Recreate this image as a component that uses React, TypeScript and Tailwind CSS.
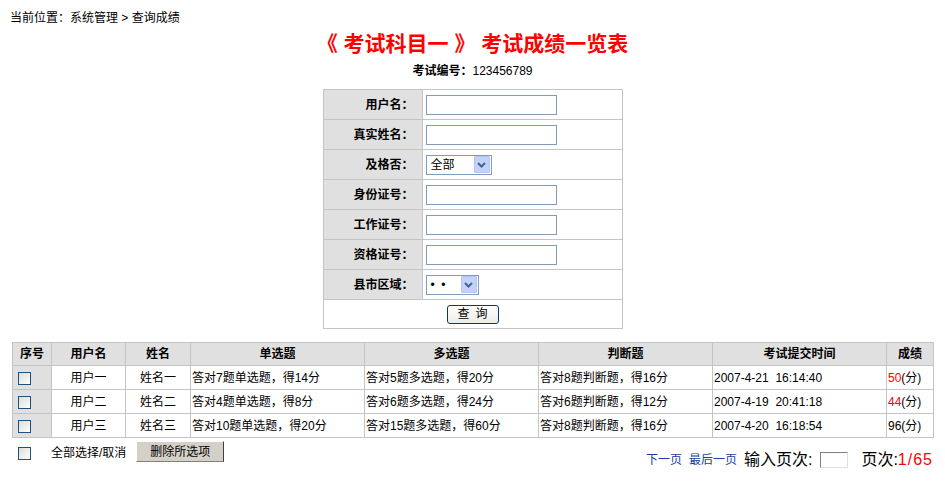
const font = { fontFamily: '"Liberation Sans", "Noto Sans CJK SC", sans-serif' }

function Chk() {
  return (
    <span className="inline-block w-[13px] h-[13px] border border-[#1c5180] bg-gradient-to-br from-[#dcdcd6] to-white align-middle" />
  )
}

function Arrow() {
  return (
    <span className="flex items-center justify-center w-[16px] h-[17px] bg-[#c1d3fb] border border-[#b4c6ef] rounded-[1px]">
      <svg width="9" height="6" viewBox="0 0 9 6">
        <path d="M1 1 L4.5 4.5 L8 1" stroke="#4d6185" strokeWidth="2" fill="none" />
      </svg>
    </span>
  )
}

function TextInput() {
  return <div className="w-[131px] h-[20px] border border-[#7f9db9] bg-white" />
}

function Select({ label, w }: { label: string; w: string }) {
  return (
    <div className={`${w} h-[20px] border border-[#7f9db9] bg-white flex items-center justify-between pl-[4px] pr-[1px]`}>
      <span className="text-[12px] text-black whitespace-pre">{label}</span>
      <Arrow />
    </div>
  )
}

const formRows: { label: string; field: React.ReactNode }[] = [
  { label: '用户名：', field: <TextInput /> },
  { label: '真实姓名：', field: <TextInput /> },
  { label: '及格否：', field: <Select label="全部" w="w-[66px]" /> },
  { label: '身份证号：', field: <TextInput /> },
  { label: '工作证号：', field: <TextInput /> },
  { label: '资格证号：', field: <TextInput /> },
  { label: '县市区域：', field: <Select label="•  •" w="w-[53px]" /> },
]

const results = [
  ['用户一', '姓名一', '答对7题单选题，得14分', '答对5题多选题，得20分', '答对8题判断题，得16分', '2007-4-21  16:14:40', '50', true],
  ['用户二', '姓名二', '答对4题单选题，得8分', '答对6题多选题，得24分', '答对6题判断题，得12分', '2007-4-19  20:41:18', '44', true],
  ['用户三', '姓名三', '答对10题单选题，得20分', '答对15题多选题，得60分', '答对8题判断题，得16分', '2007-4-20  16:18:54', '96', false],
] as const

export default function App() {
  return (
    <div className="w-[945px] h-[482px] bg-white text-black text-[12px]" style={font}>
      <div className="pl-[10px] pt-[10px] h-[26px] leading-[16px]">当前位置：系统管理 &gt; 查询成绩</div>

      <h1 className="text-center text-[21px] font-bold text-[#ff0000] leading-[28px] mt-[4px]">
        《 考试科目一 》 考试成绩一览表
      </h1>
      <div className="text-center mt-[5px] leading-[16px]">
        <span className="font-bold">考试编号：</span>123456789
      </div>

      <table className="mx-auto mt-[10px] w-[300px] border-collapse border border-[#c4c4c4]">
        <tbody>
          {formRows.map((r) => (
            <tr key={r.label} className="h-[30px]">
              <td className="w-[99px] bg-[#e0e0e0] border border-[#c4c4c4] text-right font-bold pr-[8px]">{r.label}</td>
              <td className="border border-[#c4c4c4] pl-[3px]">{r.field}</td>
            </tr>
          ))}
          <tr className="h-[29px]">
            <td colSpan={2} className="border border-[#c4c4c4] text-center">
              <button className="w-[52px] h-[19px] rounded-[3px] border border-[#003c74] bg-gradient-to-b from-white to-[#ecebe6] text-[12px] leading-[15px] tracking-[6px] pl-[6px]">
                查询
              </button>
            </td>
          </tr>
        </tbody>
      </table>

      <table className="ml-[12px] mt-[13px] w-[922px] border-collapse border border-[#c4c4c4]">
        <thead>
          <tr className="h-[23px] bg-[#e0e0e0] font-bold">
            <th className="w-[39px] border border-[#c4c4c4]">序号</th>
            <th className="w-[74px] border border-[#c4c4c4]">用户名</th>
            <th className="w-[65px] border border-[#c4c4c4]">姓名</th>
            <th className="w-[174px] border border-[#c4c4c4]">单选题</th>
            <th className="w-[174px] border border-[#c4c4c4]">多选题</th>
            <th className="w-[174px] border border-[#c4c4c4]">判断题</th>
            <th className="w-[174px] border border-[#c4c4c4]">考试提交时间</th>
            <th className="border border-[#c4c4c4]">成绩</th>
          </tr>
        </thead>
        <tbody>
          {results.map((r) => (
            <tr key={r[0]} className="h-[24px]">
              <td className="bg-[#e0e0e0] border border-[#c4c4c4] pl-[5px]"><Chk /></td>
              <td className="border border-[#c4c4c4] text-center">{r[0]}</td>
              <td className="border border-[#c4c4c4] text-center">{r[1]}</td>
              <td className="border border-[#c4c4c4] pl-[1px]">{r[2]}</td>
              <td className="border border-[#c4c4c4] pl-[1px]">{r[3]}</td>
              <td className="border border-[#c4c4c4] pl-[1px]">{r[4]}</td>
              <td className="border border-[#c4c4c4] pl-[1px] whitespace-pre">{r[5]}</td>
              <td className="border border-[#c4c4c4] pl-[1px]">
                <span className={r[7] ? 'text-[#ff0000]' : ''}>{r[6]}</span>(分)
              </td>
            </tr>
          ))}
        </tbody>
      </table>

      <div className="flex items-start mt-[3px] h-[34px]">
        <div className="flex items-center pt-[3px]">
          <span className="ml-[18px]"><Chk /></span>
          <span className="ml-[20px]">全部选择/取消</span>
        </div>
        <button className="ml-[10px] w-[88px] h-[21px] bg-[#d4d0c8] border border-t-white border-l-white border-b-[#808080] border-r-[#404040] text-[12px] leading-[16px]">
          删除所选项
        </button>
        <div className="ml-auto mr-[12px] flex items-end pt-[9px]">
          <span className="text-[#1a3f9c]">下一页</span>
          <span className="text-[#1a3f9c] ml-[7px]">最后一页</span>
          <span className="text-[16px] ml-[7px] leading-[19px]">输入页次:</span>
          <span className="ml-[8px] mb-[1px] w-[28px] h-[16px] border border-t-[#808080] border-l-[#808080] border-b-[#e0e0e0] border-r-[#e0e0e0] bg-white" />
          <span className="text-[16px] ml-[13px] leading-[19px]">
            页次:<span className="text-[#ff0000] tracking-[1px]">1/65</span>
          </span>
        </div>
      </div>
    </div>
  )
}
